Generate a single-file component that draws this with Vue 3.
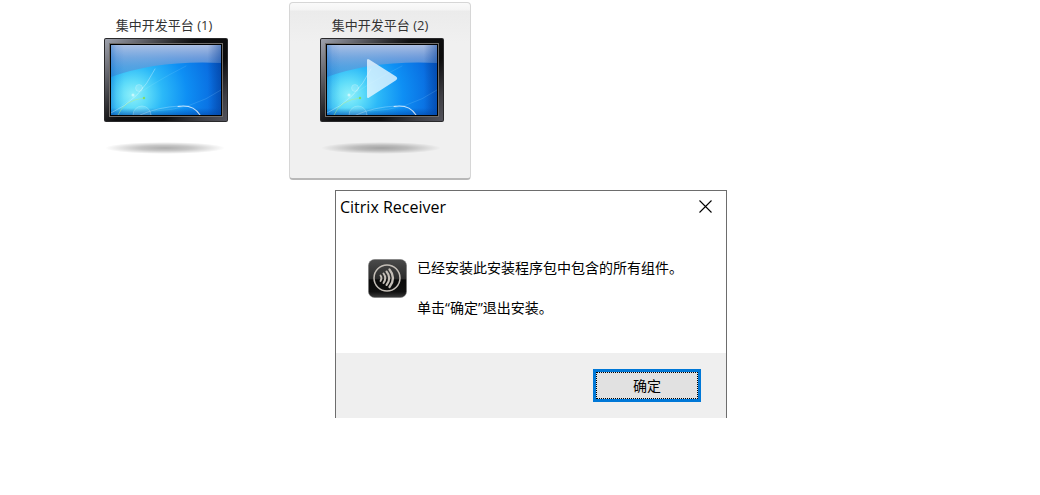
<script setup>
import { ref } from 'vue'

const desktops = [
  { id: 1, name: '集中开发平台 (1)' },
  { id: 2, name: '集中开发平台 (2)' }
]

const activeId = ref(2)
const dialogOpen = ref(true)

const closeDialog = () => {
  dialogOpen.value = false
}
</script>

<template>
  <main class="page">
    <div class="desktops">
      <button
        v-for="desktop in desktops"
        :key="desktop.id"
        type="button"
        :class="['desktop', { active: desktop.id === activeId }]"
        @click="activeId = desktop.id"
      >
        <span class="desktop-name">{{ desktop.name }}</span>
        <svg class="monitor" viewBox="0 0 124 120" aria-hidden="true">
          <defs>
            <linearGradient
              :id="`frame-${desktop.id}`"
              gradientUnits="userSpaceOnUse"
              x1="0"
              y1="0"
              x2="104"
              y2="104"
            >
              <stop offset="0" stop-color="#a3a7b2" />
              <stop offset="0.16" stop-color="#6e6f77" />
              <stop offset="0.36" stop-color="#28282b" />
              <stop offset="0.45" stop-color="#0e0e0f" />
              <stop offset="0.68" stop-color="#0b0b0c" />
              <stop offset="0.86" stop-color="#3d3d43" />
              <stop offset="1" stop-color="#55555e" />
            </linearGradient>
            <radialGradient
              :id="`sky-${desktop.id}`"
              gradientUnits="userSpaceOnUse"
              cx="29"
              cy="57"
              r="98"
            >
              <stop offset="0" stop-color="#8ff0fa" />
              <stop offset="0.14" stop-color="#5edcf9" />
              <stop offset="0.3" stop-color="#2cb9f8" />
              <stop offset="0.55" stop-color="#0e8ff4" />
              <stop offset="0.8" stop-color="#0a70e2" />
              <stop offset="1" stop-color="#0650bb" />
            </radialGradient>
            <linearGradient :id="`gloss-${desktop.id}`" x1="0" y1="0" x2="0" y2="1">
              <stop offset="0" stop-color="#b4c3e3" stop-opacity="0.95" />
              <stop offset="0.4" stop-color="#86a6da" stop-opacity="0.8" />
              <stop offset="1" stop-color="#3c8ad8" stop-opacity="0.6" />
            </linearGradient>
            <linearGradient :id="`edge-${desktop.id}`" x1="0" y1="0" x2="1" y2="0">
              <stop offset="0" stop-color="#0460c4" stop-opacity="0.35" />
              <stop offset="0.05" stop-color="#0460c4" stop-opacity="0.1" />
              <stop offset="0.12" stop-color="#0460c4" stop-opacity="0" />
              <stop offset="0.88" stop-color="#003a94" stop-opacity="0" />
              <stop offset="1" stop-color="#003a94" stop-opacity="0.45" />
            </linearGradient>
            <linearGradient :id="`floor-${desktop.id}`" x1="0" y1="0" x2="0" y2="1">
              <stop offset="0.9" stop-color="#0348a8" stop-opacity="0" />
              <stop offset="1" stop-color="#0348a8" stop-opacity="0.6" />
            </linearGradient>
            <radialGradient :id="`shadow-${desktop.id}`">
              <stop offset="0" stop-color="#000" stop-opacity="0.32" />
              <stop offset="0.45" stop-color="#000" stop-opacity="0.22" />
              <stop offset="0.8" stop-color="#000" stop-opacity="0.08" />
              <stop offset="1" stop-color="#000" stop-opacity="0" />
            </radialGradient>
            <clipPath :id="`screen-${desktop.id}`">
              <rect x="7" y="7" width="110" height="70" />
            </clipPath>
          </defs>

          <rect width="124" height="84" rx="2" fill="#29292b" />
          <rect x="1" y="1" width="122" height="82" rx="1" :fill="`url(#frame-${desktop.id})`" />
          <rect x="5.5" y="5.5" width="113" height="73" fill="#000" stroke="#6f6c69" />

          <g :clip-path="`url(#screen-${desktop.id})`" fill="none" stroke-linecap="round">
            <rect x="7" y="7" width="110" height="70" :fill="`url(#sky-${desktop.id})`" />
            <path d="M7 7H117V25Q54 22 7 39Z" :fill="`url(#gloss-${desktop.id})`" />
            <rect x="7" y="7" width="110" height="70" :fill="`url(#edge-${desktop.id})`" />
            <rect x="7" y="7" width="110" height="70" :fill="`url(#floor-${desktop.id})`" />
            <path d="M7 75Q36 62 51 31" stroke="#fff" stroke-opacity="0.4" stroke-width="0.8" />
            <path d="M18 67Q48 45 82 28" stroke="#c8f6ff" stroke-opacity="0.12" />
            <path d="M50 73Q88 72 117 52" stroke="#9bdcff" stroke-opacity="0.18" />
            <path d="M14 77Q20 62 40 60" stroke="#b4ec8a" stroke-opacity="0.6" stroke-width="0.8" />
            <circle cx="40" cy="60" r="1.2" fill="#7fdc6a" />
            <circle cx="35" cy="50" r="3.5" fill="#fff" fill-opacity="0.15" stroke="#fff" stroke-opacity="0.2" />
            <circle cx="29" cy="57" r="1.5" fill="#fff" fill-opacity="0.5" />
            <circle cx="38" cy="77" r="9" fill="#fff" fill-opacity="0.1" stroke="#fff" stroke-opacity="0.22" />
            <path d="M36 77Q54 69 76 68" stroke="#fff" stroke-opacity="0.25" />
            <path d="M74 68.5Q89 66 96 77" stroke="#fff" stroke-opacity="0.75" stroke-width="1.1" />
          </g>

          <path
            v-if="desktop.id === activeId"
            d="M47 22.5Q47 20 49.2 21.4L76 38.4Q78.4 40.3 76 42.2L49.2 59.4Q47 60.8 47 58.4Z"
            fill="#ecf9ff"
            fill-opacity="0.78"
          />
          <ellipse cx="61" cy="110" rx="60" ry="6" :fill="`url(#shadow-${desktop.id})`" />
        </svg>
      </button>
    </div>

    <section v-if="dialogOpen" class="dialog" role="dialog" aria-labelledby="dialog-title">
      <header class="dialog-header">
        <h1 id="dialog-title">Citrix Receiver</h1>
        <button type="button" class="close" aria-label="关闭" @click="closeDialog">
          <svg viewBox="0 0 13 13" aria-hidden="true">
            <path d="M0.5 0.5L12.5 12.5M12.5 0.5L0.5 12.5" fill="none" stroke="#000" stroke-width="1.1" />
          </svg>
        </button>
      </header>

      <div class="dialog-body">
        <svg class="app-icon" viewBox="0 0 39 39" aria-hidden="true">
          <defs>
            <linearGradient id="app-bg" x1="0" y1="0" x2="0" y2="1">
              <stop offset="0" stop-color="#4a4a4a" />
              <stop offset="0.5" stop-color="#2c2c2c" />
              <stop offset="0.54" stop-color="#0a0a0a" />
              <stop offset="0.85" stop-color="#101010" />
              <stop offset="1" stop-color="#3c3c3c" />
            </linearGradient>
          </defs>
          <rect x="0.5" y="0.5" width="38" height="38" rx="6" fill="url(#app-bg)" stroke="#777" stroke-opacity="0.6" />
          <g fill="none" stroke="#c4beb7" stroke-linecap="round">
            <circle cx="19" cy="19" r="13" stroke-width="1.5" />
            <path d="M12.5 16.5Q14.5 19 12.5 22" stroke-width="1.8" />
            <path d="M15.5 14.5Q19 19 15.5 24" stroke-width="2" />
            <path d="M18.5 12.5Q24 19 18.5 26" stroke-width="2.1" />
            <path d="M21.5 10.5Q28.5 19 21.5 28" stroke-width="2.3" />
          </g>
        </svg>
        <div class="message">
          <p>已经安装此安装程序包中包含的所有组件。</p>
          <p>单击“确定”退出安装。</p>
        </div>
      </div>

      <footer class="dialog-footer">
        <button type="button" class="confirm" @click="closeDialog">
          <span>确定</span>
        </button>
      </footer>
    </section>
  </main>
</template>

<style>
body {
  background: #fff;
}
</style>

<style scoped>
.page {
  min-height: 100vh;
  box-sizing: border-box;
  padding-top: 2px;
  font-family: 'Open Sans', 'Noto Sans CJK SC', sans-serif;
  color: #333;
}

.desktops {
  display: flex;
  flex-wrap: wrap;
  gap: 34px;
  padding-left: 73px;
}

.desktop {
  box-sizing: border-box;
  width: 182px;
  height: 178px;
  padding: 12px 0 0;
  display: flex;
  flex-direction: column;
  align-items: center;
  border: 1px solid transparent;
  border-radius: 4px;
  background: transparent;
  color: inherit;
  font: inherit;
  cursor: pointer;
}

.desktop.active {
  border-color: #d6d6d6;
  border-bottom: 2px solid #b8b8b8;
  background: linear-gradient(#fafafa 0, #f4f4f4 7px, #ebebeb 8px, #f0f0f0 40px, #f0f0f0 100%);
}

.desktop-name {
  font-size: 13px;
  line-height: 20px;
  margin-bottom: 3px;
}

.monitor {
  width: 124px;
  height: 120px;
  margin-left: 4px;
}

.dialog {
  width: 390px;
  max-width: 100%;
  margin: 10px 0 0 335px;
  border: 1px solid #6d6d6d;
  border-bottom: none;
  background: #fff;
  color: #000;
}

.dialog-header {
  display: flex;
  align-items: center;
  justify-content: space-between;
  height: 31px;
  padding: 0 14px 0 4px;
}

.dialog-header h1 {
  margin: 0;
  font-size: 16px;
  line-height: 22px;
  font-weight: 400;
}

.close {
  display: flex;
  padding: 0;
  border: none;
  background: none;
  cursor: pointer;
}

.close svg {
  width: 13px;
  height: 13px;
}

.dialog-body {
  display: flex;
  align-items: flex-start;
  gap: 10px;
  padding: 37px 32px 35px;
}

.app-icon {
  flex: none;
  width: 39px;
  height: 39px;
}

.message p {
  margin: 0 0 22px;
  font-size: 14px;
  line-height: 18px;
  white-space: nowrap;
}

.message p:last-child {
  margin-bottom: 1px;
}

.dialog-footer {
  display: flex;
  justify-content: flex-end;
  padding: 16px 25px;
  background: #efefef;
}

.confirm {
  width: 108px;
  height: 33px;
  padding: 0;
  display: flex;
  border: 3px solid #0078d7;
  background: #e1e1e1;
  color: #000;
  font: inherit;
  font-size: 14px;
  cursor: pointer;
}

.confirm span {
  flex: 1;
  align-self: stretch;
  display: flex;
  align-items: center;
  justify-content: center;
  padding-bottom: 2px;
  border: 1px dotted #000;
}
</style>
